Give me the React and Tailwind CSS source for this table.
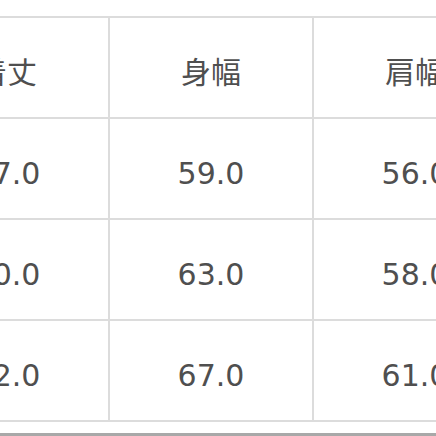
const headers = ["着丈", "身幅", "肩幅"];
const rows = [
  ["67.0", "59.0", "56.0"],
  ["70.0", "63.0", "58.0"],
  ["72.0", "67.0", "61.0"],
];

const Cell = ({ children }) => (
  <div className="flex h-[101px] w-[204px] items-center justify-center border-r-2 border-b-2 border-[#dcdcdc] pt-[10px]">
    {children}
  </div>
);

export default function App() {
  return (
    <div
      className="relative h-[436px] w-[436px] overflow-hidden bg-white text-[30px] text-[#4f4f4f]"
      style={{ fontFamily: '"DejaVu Sans", "Noto Sans CJK JP", sans-serif' }}
    >
      <div className="ml-[-96px] mt-[16px] grid w-[614px] grid-cols-[204px_204px_204px] border-t-2 border-l-2 border-[#dcdcdc]">
        {headers.map((h) => (
          <Cell key={h}>{h}</Cell>
        ))}
        {rows.map((row, i) =>
          row.map((v, j) => <Cell key={`${i}-${j}`}>{v}</Cell>)
        )}
      </div>
      <div className="mt-[11px] h-[3px] w-full bg-[#a8a8a8]" />
    </div>
  );
}
